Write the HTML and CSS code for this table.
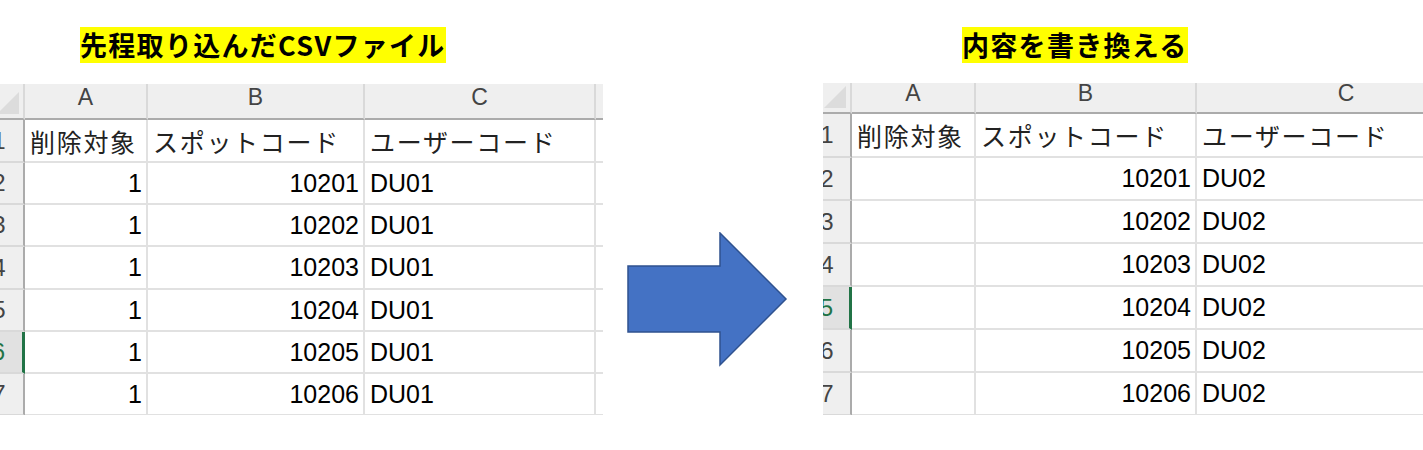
FILE: index.html
```html
<!DOCTYPE html>
<html lang="ja">
<head>
<meta charset="utf-8">
<title>CSV 書き換え</title>
<link rel="stylesheet" href="styles.css">
</head>
<body>
<div class="page">
  <section class="panel panel-left">
    <div class="title title-left"><span class="mark">先程取り込んだCSVファイル</span></div>
    <div class="sheet sheet-left">
      <div class="grid grid-left">
        <div class="corner"></div>
        <div class="colhdr">A</div>
        <div class="colhdr">B</div>
        <div class="colhdr">C</div>
        <div class="colhdr"></div>

        <div class="rowhdr">1</div>
        <div class="cell jp">削除対象</div>
        <div class="cell jp">スポットコード</div>
        <div class="cell jp">ユーザーコード</div>
        <div class="cell"></div>

        <div class="rowhdr">2</div>
        <div class="cell num">1</div>
        <div class="cell num">10201</div>
        <div class="cell">DU01</div>
        <div class="cell"></div>

        <div class="rowhdr">3</div>
        <div class="cell num">1</div>
        <div class="cell num">10202</div>
        <div class="cell">DU01</div>
        <div class="cell"></div>

        <div class="rowhdr">4</div>
        <div class="cell num">1</div>
        <div class="cell num">10203</div>
        <div class="cell">DU01</div>
        <div class="cell"></div>

        <div class="rowhdr">5</div>
        <div class="cell num">1</div>
        <div class="cell num">10204</div>
        <div class="cell">DU01</div>
        <div class="cell"></div>

        <div class="rowhdr selected">6</div>
        <div class="cell num">1</div>
        <div class="cell num">10205</div>
        <div class="cell">DU01</div>
        <div class="cell"></div>

        <div class="rowhdr">7</div>
        <div class="cell num">1</div>
        <div class="cell num">10206</div>
        <div class="cell">DU01</div>
        <div class="cell"></div>
      </div>
    </div>
  </section>

  <div class="arrow-wrap">
    <svg class="arrow" width="162" height="136" viewBox="0 0 162 136" aria-hidden="true">
      <polygon points="1,34 93,34 93,1 159,67 93,133 93,100 1,100" fill="#4472c4" stroke="#2f528f" stroke-width="1.5" stroke-linejoin="miter"/>
    </svg>
  </div>

  <section class="panel panel-right">
    <div class="title title-right"><span class="mark">内容を書き換える</span></div>
    <div class="sheet sheet-right">
      <div class="grid grid-right">
        <div class="corner"></div>
        <div class="colhdr">A</div>
        <div class="colhdr">B</div>
        <div class="colhdr">C</div>

        <div class="rowhdr">1</div>
        <div class="cell jp">削除対象</div>
        <div class="cell jp">スポットコード</div>
        <div class="cell jp">ユーザーコード</div>

        <div class="rowhdr">2</div>
        <div class="cell"></div>
        <div class="cell num">10201</div>
        <div class="cell">DU02</div>

        <div class="rowhdr">3</div>
        <div class="cell"></div>
        <div class="cell num">10202</div>
        <div class="cell">DU02</div>

        <div class="rowhdr">4</div>
        <div class="cell"></div>
        <div class="cell num">10203</div>
        <div class="cell">DU02</div>

        <div class="rowhdr selected">5</div>
        <div class="cell"></div>
        <div class="cell num">10204</div>
        <div class="cell">DU02</div>

        <div class="rowhdr">6</div>
        <div class="cell"></div>
        <div class="cell num">10205</div>
        <div class="cell">DU02</div>

        <div class="rowhdr">7</div>
        <div class="cell"></div>
        <div class="cell num">10206</div>
        <div class="cell">DU02</div>
      </div>
    </div>
  </section>
</div>
</body>
</html>
```

FILE: styles.css
```css
* { box-sizing: border-box; }

html, body {
  margin: 0;
  padding: 0;
  background: #ffffff;
}

body {
  font-family: "Liberation Sans", "Noto Sans CJK JP", sans-serif;
  color: #000;
}

.page {
  display: flex;
  width: 1423px;
  height: 450px;
  overflow: hidden;
}

.panel {
  display: flex;
  flex-direction: column;
  flex: none;
  overflow: hidden;
}

.panel-left { width: 603px; }
.panel-right { width: 600px; }

.title {
  margin-top: 27px;
  height: 36px;
}
.title-left { padding-left: 80px; }
.title-right { padding-left: 139px; }

.mark {
  display: inline-block;
  height: 36px;
  line-height: 36px;
  background: #ffff00;
  font-family: "Noto Sans CJK JP", sans-serif;
  font-weight: 700;
  font-size: 27px;
  letter-spacing: 1.3px;
  white-space: nowrap;
}

.sheet {
  overflow: hidden;
}
.sheet-left { margin-top: 21px; height: 331px; }
.sheet-right { margin-top: 20px; height: 332px; }

.grid {
  display: grid;
  font-size: 25px;
}

.grid-left {
  grid-template-columns: 50px 123px 217px 231px 40px;
  grid-template-rows: 36px 43px 42px 42px 43px 42px 42px 42px;
  margin-left: -25px;
  width: 661px;
}

.grid-right {
  grid-template-columns: 48px 124px 221px 300px;
  grid-template-rows: 31px 44px 43px 43px 43px 43px 43px 43px;
  margin-left: -19px;
  width: 693px;
}

.corner {
  position: relative;
  background: #efefef;
  border-right: 2px solid #d9d9d9;
  border-bottom: 2px solid #ababab;
}
.corner::after {
  content: "";
  position: absolute;
  right: 4px;
  bottom: 4px;
  width: 0;
  height: 0;
  border-left: 22px solid transparent;
  border-bottom: 22px solid #dcdcdc;
}

.colhdr {
  display: flex;
  align-items: center;
  justify-content: center;
  padding-bottom: 8px;
  background: #efefef;
  color: #444;
  font-size: 23px;
  border-right: 2px solid #d9d9d9;
  border-bottom: 2px solid #ababab;
}

.rowhdr {
  display: flex;
  align-items: center;
  justify-content: center;
  background: #efefef;
  color: #444;
  font-size: 24px;
  border-right: 2px solid #ababab;
  border-bottom: 2px solid #d9d9d9;
}

.rowhdr.selected {
  background: #e1e1e1;
  color: #217346;
  border-right: 3px solid #217346;
}

.cell {
  display: flex;
  align-items: center;
  padding: 0 4px 0 5px;
  background: #fff;
  border-right: 2px solid #e1e1e1;
  border-bottom: 2px solid #e1e1e1;
  white-space: nowrap;
}

.cell.num {
  justify-content: flex-end;
  padding-right: 4px;
}

.cell.jp {
  letter-spacing: 1.7px;
  color: #222;
}

.arrow-wrap {
  flex: none;
  width: 220px;
  padding-top: 232px;
  padding-left: 24px;
}

.arrow {
  display: block;
}
```
